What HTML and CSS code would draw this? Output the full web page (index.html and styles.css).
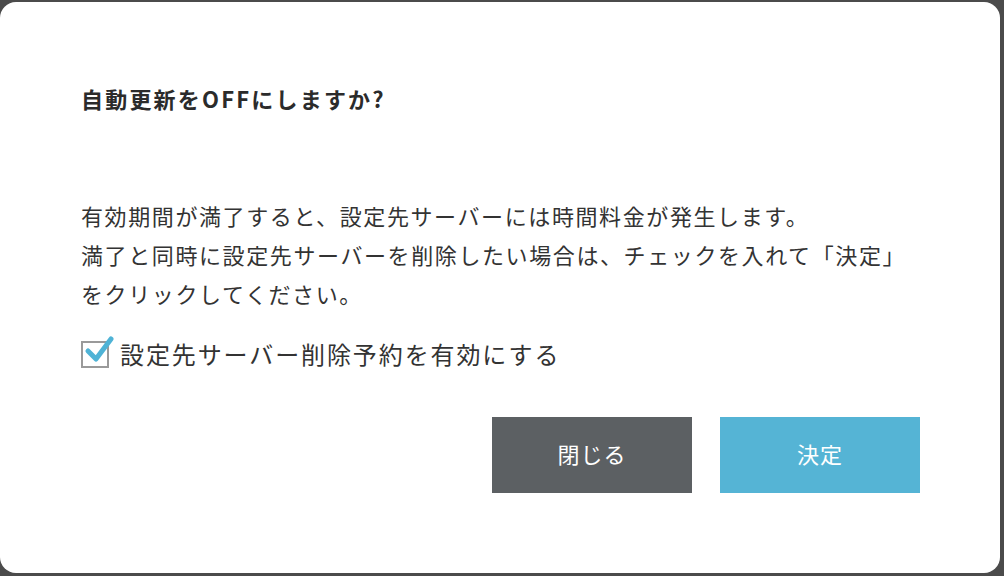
FILE: index.html
```html
<!DOCTYPE html>
<html lang="ja">
<head>
    <meta charset="UTF-8" />
    <title>自動更新</title>
    <link rel="stylesheet" href="styles.css">
</head>

<body>
    <div class="modal">
        <h2 class="title">自動更新をOFFにしますか?</h2>
        <p class="text">
            有効期間が満了すると、設定先サーバーには時間料金が発生します。<br>
            満了と同時に設定先サーバーを削除したい場合は、チェックを入れて「決定」<br>
            をクリックしてください。
        </p>
        <label class="check">
            <span class="box">
                <svg width="34" height="34" viewBox="0 0 34 34">
                    <path d="M7 17 L15 25 L30 5" fill="none" stroke="#4fb3d6" stroke-width="5" stroke-linecap="round" stroke-linejoin="round"/>
                </svg>
            </span>
            設定先サーバー削除予約を有効にする
        </label>
        <div class="btns">
            <a href="javascript:;" class="btn close">閉じる</a>
            <a href="javascript:;" class="btn ok">決定</a>
        </div>
    </div>
</body>

</html>
```

FILE: styles.css
```css
*{
    margin: 0;
    padding: 0;
}
body{
    background-color: #4b4b4b;
    padding-top: 2px;
    font-family: "Noto Sans CJK JP", "Noto Sans", sans-serif;
    color: #333;
}
.modal{
    width: 1000px;
    height: 571px;
    box-sizing: border-box;
    padding: 81px 80px 0 81px;
    background-color: #fff;
    border-radius: 16px;
}
.title{
    font-size: 22px;
    line-height: 30px;
    font-weight: bold;
    letter-spacing: 2.2px;
    color: #2b2b2b;
}
.text{
    margin-top: 83px;
    font-size: 22px;
    line-height: 39px;
    letter-spacing: 1.6px;
}
.check{
    display: flex;
    align-items: center;
    margin-top: 21px;
    font-size: 24px;
    line-height: 40px;
    letter-spacing: 1.9px;
}
.box{
    position: relative;
    width: 24px;
    height: 23px;
    border: 2px solid #9a9a9a;
    margin-right: 11px;
}
.box svg{
    position: absolute;
    left: -2px;
    top: -9px;
}
.btns{
    display: flex;
    justify-content: flex-end;
    gap: 28px;
    margin-top: 43px;
}
.btn{
    display: block;
    width: 200px;
    height: 76px;
    line-height: 72px;
    text-align: center;
    font-size: 22px;
    color: #fff;
    text-decoration: none;
    letter-spacing: 1px;
}
.close{
    background-color: #5c6063;
}
.ok{
    background-color: #55b4d5;
}
```
